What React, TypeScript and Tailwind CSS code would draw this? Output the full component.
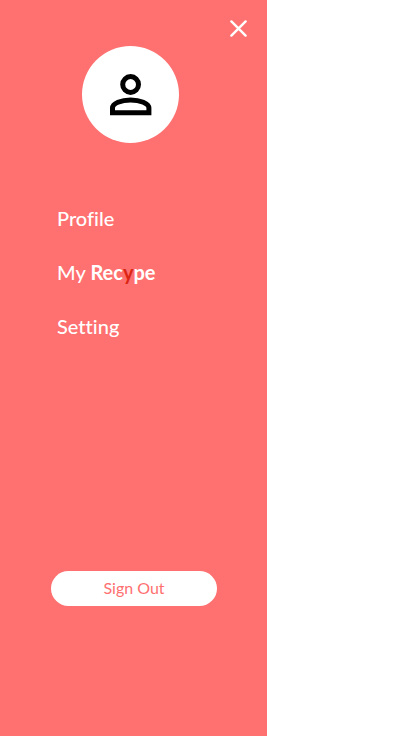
const links = [
  { id: 'profile', label: <>Profile</> },
  {
    id: 'my-recype',
    label: (
      <>
        My{' '}
        <span className="font-bold">
          Rec<span className="text-[#dc2614]">y</span>pe
        </span>
      </>
    ),
  },
  { id: 'setting', label: <>Setting</> },
];

function CloseIcon() {
  return (
    <svg viewBox="0 0 17 17" className="size-[17px]" fill="none" stroke="currentColor" strokeWidth="2.4" strokeLinecap="round" aria-hidden="true">
      <path d="M1.4 1.4 15.6 15.6M15.6 1.4 1.4 15.6" />
    </svg>
  );
}

function PersonIcon() {
  return (
    <svg viewBox="0 0 42 42" className="size-[42px]" fill="none" stroke="currentColor" strokeWidth="5" aria-hidden="true">
      <circle cx="20.6" cy="10.5" r="7.9" />
      <path d="M2.5 38.8V34C2.5 29.5 11.1 25.9 20.6 25.9S38.9 29.5 38.9 34V38.8Z" />
    </svg>
  );
}

export default function App() {
  return (
    <div className="min-h-screen bg-white font-['Lato','Liberation_Sans',sans-serif] [font-variant-ligatures:none]">
      <aside className="flex min-h-screen w-[64.5%] flex-col bg-[#ff7070] pt-4 text-white">
        <button type="button" aria-label="Close menu" className="mr-4 self-end p-1">
          <CloseIcon />
        </button>
        <div className="mt-[5px] mr-1.5 flex size-[97px] items-center justify-center self-center rounded-full bg-white text-black">
          <PersonIcon />
        </div>
        <nav className="mt-[60px] ml-[57px] flex flex-col gap-6 text-xl leading-[30px] font-medium">
          {links.map((link) => (
            <a key={link.id} href={`#${link.id}`} className="h-[30px]">
              {link.label}
            </a>
          ))}
        </nav>
        <button type="button" className="mt-auto mr-[50px] mb-[130px] ml-[51px] h-[35px] rounded-full bg-white pb-0.5 text-base text-[#ff7070]">
          Sign Out
        </button>
      </aside>
    </div>
  );
}
